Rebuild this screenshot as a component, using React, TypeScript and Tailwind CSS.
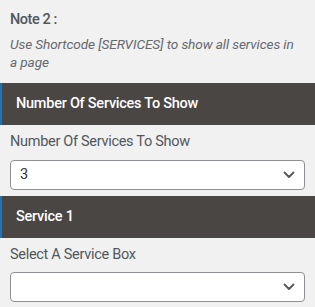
import React from "react";

function Chevron() {
  return (
    <svg width="12" height="8" viewBox="0 0 12 8" fill="none">
      <path d="M1.5 1.5 L6 6 L10.5 1.5" stroke="#50575e" strokeWidth="1.8" strokeLinecap="round" strokeLinejoin="round" />
    </svg>
  );
}

function Select({ value }: { value: string }) {
  return (
    <div className="mx-[10px] h-[30px] bg-white border border-[#8c8f94] rounded-[4px] flex items-center justify-between pl-[9px] pr-[9px] text-[14.5px] tracking-[-0.3px] text-[#2c3338]">
      <span>{value}</span>
      <Chevron />
    </div>
  );
}

function Header({ title }: { title: string }) {
  return (
    <div className="h-[42px] bg-[#4a4644] border-l-2 border-[#2271b1] flex items-center pl-[14px] text-white text-[14.5px] tracking-[-0.25px] font-medium">
      {title}
    </div>
  );
}

export default function App() {
  return (
    <div className="w-[315px] h-[307px] bg-[#f1f1f1] overflow-hidden" style={{ fontFamily: "Roboto, 'Liberation Sans', sans-serif" }}>
      <div className="px-[10px] pt-[11px]">
        <div className="text-[14.5px] leading-[18px] font-medium tracking-[-0.45px] text-[#50575e]">Note 2 :</div>
        <div className="mt-[6px] pr-[8px] text-[13.6px] leading-[18px] italic tracking-[-0.1px] text-[#646970]">
          Use Shortcode [SERVICES] to show all services in a page
        </div>
      </div>
      <div className="mt-[12px]">
        <Header title="Number Of Services To Show" />
      </div>
      <div className="mt-[8px] px-[10px] text-[14.5px] leading-[18px] tracking-[-0.3px] text-[#50575e]">Number Of Services To Show</div>
      <div className="mt-[9px]">
        <Select value="3" />
      </div>
      <div className="mt-[6px]">
        <Header title="Service 1" />
      </div>
      <div className="mt-[8px] px-[10px] text-[14.5px] leading-[18px] tracking-[-0.3px] text-[#50575e]">Select A Service Box</div>
      <div className="mt-[8px]">
        <Select value="" />
      </div>
    </div>
  );
}
